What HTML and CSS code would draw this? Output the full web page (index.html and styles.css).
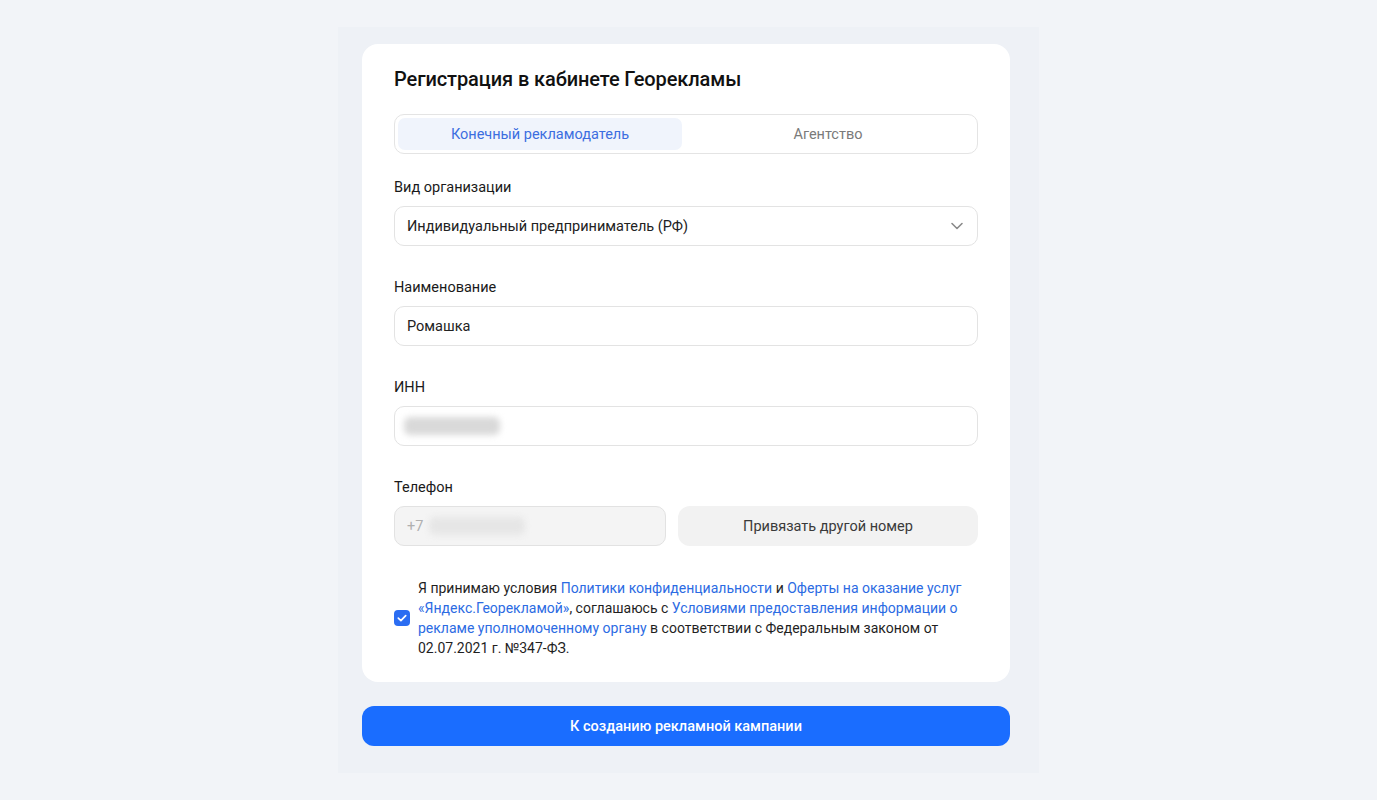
FILE: index.html
```html
<!DOCTYPE html>
<html lang="ru">
<head>
<meta charset="utf-8">
<title>Регистрация в кабинете Георекламы</title>
<link rel="stylesheet" href="styles.css">
</head>
<body>
<div class="page">
  <div class="panel">
    <div class="card">
      <h1 class="title">Регистрация в кабинете Георекламы</h1>
      <div class="tabs">
        <div class="tab tab-active">Конечный рекламодатель</div>
        <div class="tab">Агентство</div>
      </div>

      <div class="field">
        <div class="label">Вид организации</div>
        <div class="input select">
          <span>Индивидуальный предприниматель (РФ)</span>
          <svg class="chevron" width="14" height="10" viewBox="0 0 14 10"><path d="M2 2.5 L7 7.5 L12 2.5" fill="none" stroke="#8a8a8a" stroke-width="1.6" stroke-linecap="round" stroke-linejoin="round"/></svg>
        </div>
      </div>

      <div class="field">
        <div class="label">Наименование</div>
        <div class="input"><span>Ромашка</span></div>
      </div>

      <div class="field">
        <div class="label">ИНН</div>
        <div class="input input-blur"><span class="blur blur-inn"></span></div>
      </div>

      <div class="field">
        <div class="label">Телефон</div>
        <div class="phone-row">
          <div class="input input-disabled"><span class="prefix">+7</span><span class="blur blur-phone"></span></div>
          <div class="btn-secondary">Привязать другой номер</div>
        </div>
      </div>

      <div class="terms">
        <div class="checkbox">
          <svg width="16" height="16" viewBox="0 0 16 16"><rect width="16" height="16" rx="4" fill="#2b6df2"/><path d="M4.3 8.2 L6.9 10.6 L11.7 5.6" fill="none" stroke="#fff" stroke-width="1.7" stroke-linecap="round" stroke-linejoin="round"/></svg>
        </div>
        <p class="terms-text">Я принимаю условия <a class="link">Политики конфиденциальности</a> и <a class="link">Оферты на оказание услуг «Яндекс.Георекламой»</a>, соглашаюсь с <a class="link">Условиями предоставления информации о рекламе уполномоченному органу</a> в соответствии с Федеральным законом от 02.07.2021 г. №347-ФЗ.</p>
      </div>
    </div>
    <div class="btn-primary">К созданию рекламной кампании</div>
  </div>
</div>
</body>
</html>
```
FILE: styles.css
```css
* { box-sizing: border-box; }
html, body { margin: 0; padding: 0; }
body {
  background: #f2f4f8;
  font-family: Roboto, "Noto Sans", "Liberation Sans", sans-serif;
  color: #1f1f1f;
  min-height: 800px;
}
.page {
  display: flex;
  justify-content: center;
  padding-top: 27px;
}
.panel {
  width: 701px;
  background: #eef1f6;
  padding: 17px 29px 27px 24px;
  display: flex;
  flex-direction: column;
  gap: 24px;
}
.card {
  background: #fff;
  border-radius: 16px;
  padding: 22px 32px 24px;
}
.title {
  margin: 0;
  font-size: 20px;
  font-weight: 500;
  line-height: 26px;
  color: #111;
  letter-spacing: -0.1px;
}
.tabs {
  margin-top: 22px;
  border: 1px solid #e4e4e4;
  border-radius: 10px;
  height: 40px;
  padding: 3px;
  display: grid;
  grid-template-columns: 284px 1fr;
}
.tab {
  display: flex;
  align-items: center;
  justify-content: center;
  font-size: 14.5px;
  color: #7a7a7a;
  border-radius: 7px;
}
.tab-active {
  background: #f0f4fc;
  color: #3c6ee0;
}
.field { margin-top: 24px; }
.field + .field { margin-top: 32px; }
.label {
  font-size: 14.5px;
  line-height: 20px;
  color: #1a1a1a;
  margin-bottom: 8px;
}
.input {
  height: 40px;
  border: 1px solid #e3e3e3;
  border-radius: 10px;
  padding: 0 12px;
  display: flex;
  align-items: center;
  font-size: 14.5px;
  color: #222;
}
.select { justify-content: space-between; padding-right: 13px; }
.chevron { display: block; }
.blur {
  display: inline-block;
  height: 18px;
  background: #d9d9d9;
  border-radius: 6px;
  filter: blur(3px);
}
.blur-inn { width: 96px; margin-left: -3px; }
.blur-phone { width: 96px; margin-left: 6px; background: #e6e6e6; }
.phone-row {
  display: grid;
  grid-template-columns: 272px 1fr;
  gap: 12px;
}
.input-disabled {
  background: #f4f4f4;
  border-color: #e2e2e2;
  color: #b3b3b3;
}
.prefix { color: #b0b0b0; }
.btn-secondary {
  height: 40px;
  border-radius: 12px;
  background: #f2f2f2;
  display: flex;
  align-items: center;
  justify-content: center;
  font-size: 14.5px;
  color: #3a3a3a;
}
.terms {
  margin-top: 32px;
  display: flex;
  align-items: center;
  gap: 8px;
}
.checkbox { flex: none; width: 16px; height: 16px; display: flex; }
.terms-text {
  margin: 0;
  font-size: 14px;
  line-height: 20px;
  color: #1f1f1f;
}
.link { color: #2c6be3; text-decoration: none; }
.btn-primary {
  height: 40px;
  border-radius: 12px;
  background: #1a6dff;
  color: #fff;
  font-size: 14.5px;
  font-weight: 500;
  display: flex;
  align-items: center;
  justify-content: center;
}
```
